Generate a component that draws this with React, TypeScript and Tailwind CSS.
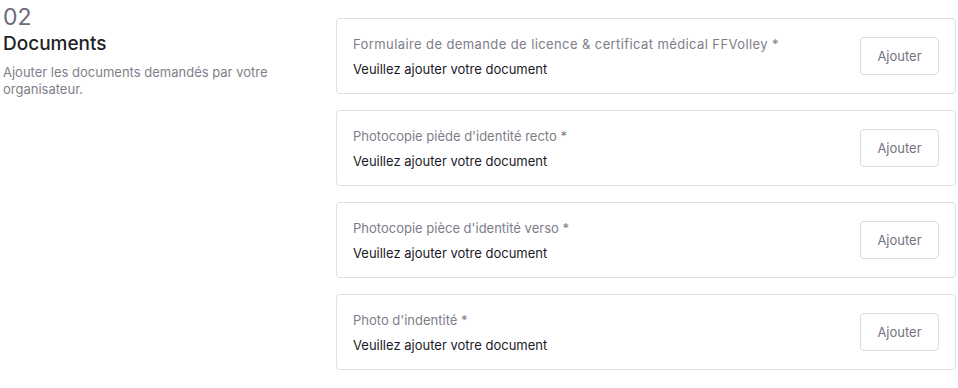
const documents = [
  { label: "Formulaire de demande de licence & certificat médical FFVolley *", wide: true },
  { label: "Photocopie piède d'identité recto *", wide: false },
  { label: "Photocopie pièce d'identité verso *", wide: false },
  { label: "Photo d'indentité *", wide: false },
];

function DocumentRow({ label, wide }: { label: string; wide: boolean }) {
  return (
    <div className="flex h-[76px] items-center justify-between rounded-[4px] border border-[#dfdfe6] bg-white pl-4 pr-4">
      <div className="flex flex-col gap-[5px]">
        <p className={wide ? "text-[13px] leading-5 tracking-[0.4px] text-[#7d7d89]" : "text-[13px] leading-5 text-[#7d7d89]"}>
          {label}
        </p>
        <p className="text-[13px] leading-5 text-[#1b1b26]">Veuillez ajouter votre document</p>
      </div>
      <button className="h-[38px] w-[79px] rounded-[4px] border border-[#dcdce3] bg-white pt-px text-[13px] text-[#74747f]">
        Ajouter
      </button>
    </div>
  );
}

export default function App() {
  return (
    <main className="min-h-screen bg-white font-['Inter',sans-serif] text-[#1b1b26]">
      <div className="flex pt-[18px] pr-[2px] pl-[3px]">
        <aside className="-mt-[13px] w-[333px] shrink-0 pr-10">
          <p className="text-[23px] leading-6 text-[#6b6b76]">02</p>
          <h2 className="mt-[3px] text-[19px] font-medium leading-6 text-[#1f1f29]">Documents</h2>
          <p className="mt-[8px] text-[13px] leading-[17px] text-[#80808b]">
            Ajouter les documents demandés par votre organisateur.
          </p>
        </aside>

        <section className="flex flex-1 flex-col gap-4">
          {documents.map((doc) => (
            <DocumentRow key={doc.label} label={doc.label} wide={doc.wide} />
          ))}
        </section>
      </div>
    </main>
  );
}
